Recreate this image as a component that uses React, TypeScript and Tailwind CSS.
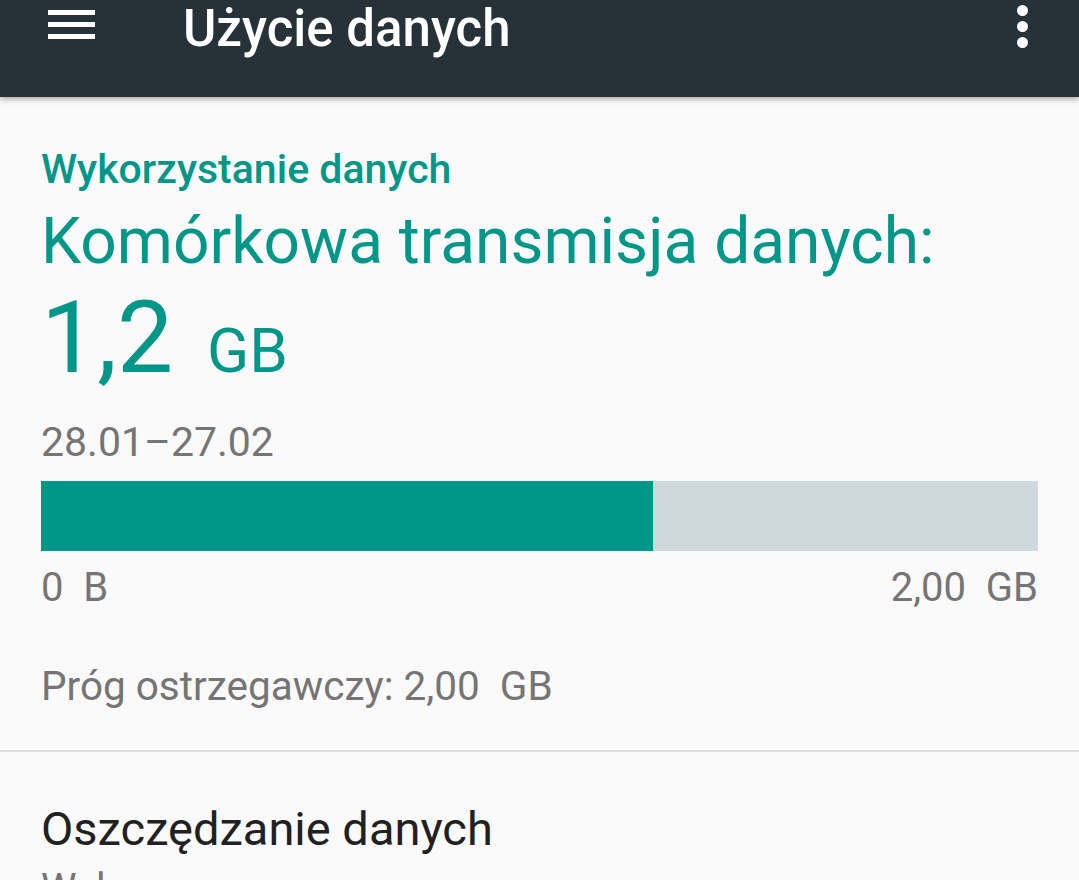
const FONT = { fontFamily: "Roboto, 'Noto Sans', sans-serif" };

export default function App() {
  const used = 0.614;

  return (
    <div className="h-[880px] w-full overflow-hidden bg-[#fafafa]" style={FONT}>
      <header className="relative z-10 flex h-[97px] items-start bg-[#263238] shadow-[0_2px_6px_rgba(0,0,0,0.35)]">
        <div className="ml-[48px] mt-[10px] flex w-[47px] flex-col gap-[7px]">
          <span className="h-[5px] bg-white" />
          <span className="h-[5px] bg-white" />
          <span className="h-[5px] bg-white" />
        </div>
        <h1 className="ml-[88px] mt-[1px] text-[51px] font-medium leading-[56px] text-white">
          Użycie danych
        </h1>
        <div className="ml-auto mr-[51px] mt-[5px] flex flex-col items-center gap-[5px]">
          <span className="h-[11px] w-[11px] rounded-full bg-white" />
          <span className="h-[11px] w-[11px] rounded-full bg-white" />
          <span className="h-[11px] w-[11px] rounded-full bg-white" />
        </div>
      </header>

      <section className="px-[41px]">
        <p className="mt-[48px] text-[41px] font-medium leading-[48px] text-[#009688]">
          Wykorzystanie danych
        </p>
        <p className="mt-[11px] text-[64px] leading-[76px] text-[#009688]">
          Komórkowa transmisja danych:
        </p>
        <div className="mt-[3px] flex items-baseline gap-[34px] leading-[110px] text-[#009688]">
          <span className="text-[100px]">1,2</span>
          <span className="text-[62px]">GB</span>
        </div>
        <p className="mt-[12px] text-[41px] leading-[48px] text-[#757575]">28.01–27.02</p>

        <div className="mt-[15px] flex h-[70px] w-full bg-[#cfd8dc]">
          <div className="h-full bg-[#009688]" style={{ width: `${used * 100}%` }} />
        </div>

        <div className="mt-[13px] flex justify-between text-[40px] leading-[48px] text-[#757575]">
          <span>0&nbsp; B</span>
          <span>2,00&nbsp; GB</span>
        </div>

        <p className="mt-[50px] text-[40.5px] leading-[48px] text-[#757575]">
          Próg ostrzegawczy: 2,00&nbsp; GB
        </p>
      </section>

      <div className="mt-[40px] h-[2px] bg-[#dedede]" />

      <section className="px-[41px]">
        <p className="mt-[47px] text-[47px] leading-[60px] text-[#212121]">Oszczędzanie danych</p>
        <p className="mt-[6px] text-[40px] leading-[48px] text-[#757575]">Wyłączone</p>
      </section>
    </div>
  );
}
